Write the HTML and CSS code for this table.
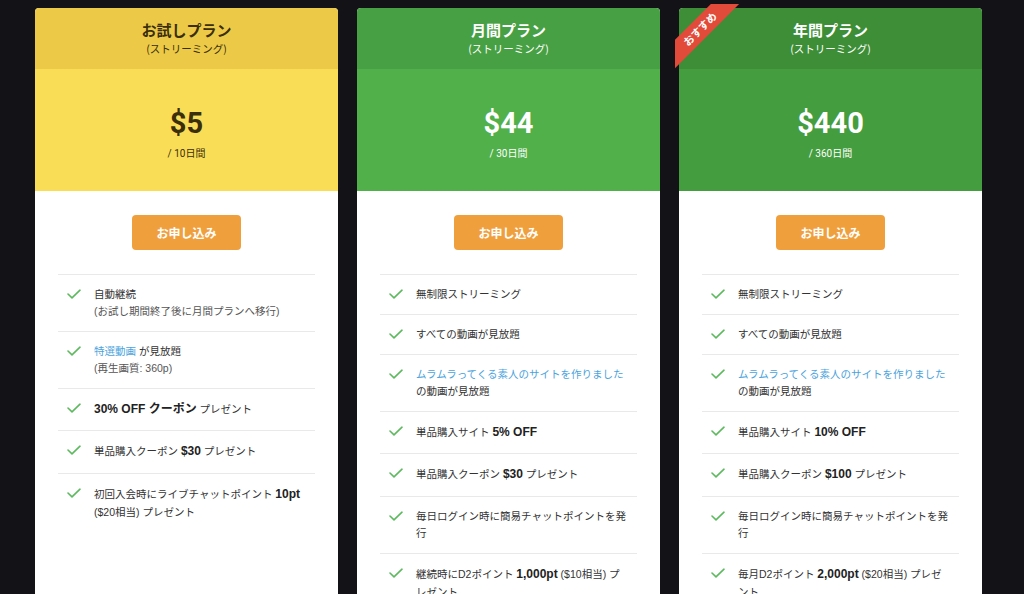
FILE: index.html
```html
<!DOCTYPE html>
<html lang="ja">
<head>
<meta charset="utf-8">
<title>プラン</title>
<link rel="stylesheet" href="styles.css">
</head>
<body>
<main class="plans">
  <section class="plan plan-trial">
    <header class="plan-head">
      <h2 class="plan-title">お試しプラン</h2>
      <p class="plan-sub">(ストリーミング)</p>
    </header>
    <div class="plan-price">
      <p class="price">$5</p>
      <p class="per">/ 10日間</p>
    </div>
    <div class="plan-body">
      <a class="btn" href="#">お申し込み</a>
      <ul class="features">
        <li><svg class="check" viewBox="0 0 14 10"><polyline points="1,5 5,8.8 13,1.2"/></svg><div class="ftext">自動継続<br><span class="note">(お試し期間終了後に月間プランへ移行)</span></div></li>
        <li><svg class="check" viewBox="0 0 14 10"><polyline points="1,5 5,8.8 13,1.2"/></svg><div class="ftext"><a class="link" href="#">特選動画</a> が見放題<br><span class="note">(再生画質: 360p)</span></div></li>
        <li><svg class="check" viewBox="0 0 14 10"><polyline points="1,5 5,8.8 13,1.2"/></svg><div class="ftext"><b>30% OFF クーポン</b> プレゼント</div></li>
        <li><svg class="check" viewBox="0 0 14 10"><polyline points="1,5 5,8.8 13,1.2"/></svg><div class="ftext">単品購入クーポン <b>$30</b> プレゼント</div></li>
        <li><svg class="check" viewBox="0 0 14 10"><polyline points="1,5 5,8.8 13,1.2"/></svg><div class="ftext">初回入会時にライブチャットポイント <b>10pt</b> ($20相当) プレゼント</div></li>
      </ul>
    </div>
  </section>

  <section class="plan plan-month">
    <header class="plan-head">
      <h2 class="plan-title">月間プラン</h2>
      <p class="plan-sub">(ストリーミング)</p>
    </header>
    <div class="plan-price">
      <p class="price">$44</p>
      <p class="per">/ 30日間</p>
    </div>
    <div class="plan-body">
      <a class="btn" href="#">お申し込み</a>
      <ul class="features">
        <li><svg class="check" viewBox="0 0 14 10"><polyline points="1,5 5,8.8 13,1.2"/></svg><div class="ftext">無制限ストリーミング</div></li>
        <li><svg class="check" viewBox="0 0 14 10"><polyline points="1,5 5,8.8 13,1.2"/></svg><div class="ftext">すべての動画が見放題</div></li>
        <li><svg class="check" viewBox="0 0 14 10"><polyline points="1,5 5,8.8 13,1.2"/></svg><div class="ftext"><a class="link" href="#">ムラムラってくる素人のサイトを作りました</a><br>の動画が見放題</div></li>
        <li><svg class="check" viewBox="0 0 14 10"><polyline points="1,5 5,8.8 13,1.2"/></svg><div class="ftext">単品購入サイト <b>5% OFF</b></div></li>
        <li><svg class="check" viewBox="0 0 14 10"><polyline points="1,5 5,8.8 13,1.2"/></svg><div class="ftext">単品購入クーポン <b>$30</b> プレゼント</div></li>
        <li><svg class="check" viewBox="0 0 14 10"><polyline points="1,5 5,8.8 13,1.2"/></svg><div class="ftext">毎日ログイン時に簡易チャットポイントを発行</div></li>
        <li><svg class="check" viewBox="0 0 14 10"><polyline points="1,5 5,8.8 13,1.2"/></svg><div class="ftext">継続時にD2ポイント <b>1,000pt</b> ($10相当) プレゼント</div></li>
      </ul>
    </div>
  </section>

  <section class="plan plan-year">
    <div class="ribbon"><span>おすすめ</span></div>
    <header class="plan-head">
      <h2 class="plan-title">年間プラン</h2>
      <p class="plan-sub">(ストリーミング)</p>
    </header>
    <div class="plan-price">
      <p class="price">$440</p>
      <p class="per">/ 360日間</p>
    </div>
    <div class="plan-body">
      <a class="btn" href="#">お申し込み</a>
      <ul class="features">
        <li><svg class="check" viewBox="0 0 14 10"><polyline points="1,5 5,8.8 13,1.2"/></svg><div class="ftext">無制限ストリーミング</div></li>
        <li><svg class="check" viewBox="0 0 14 10"><polyline points="1,5 5,8.8 13,1.2"/></svg><div class="ftext">すべての動画が見放題</div></li>
        <li><svg class="check" viewBox="0 0 14 10"><polyline points="1,5 5,8.8 13,1.2"/></svg><div class="ftext"><a class="link" href="#">ムラムラってくる素人のサイトを作りました</a><br>の動画が見放題</div></li>
        <li><svg class="check" viewBox="0 0 14 10"><polyline points="1,5 5,8.8 13,1.2"/></svg><div class="ftext">単品購入サイト <b>10% OFF</b></div></li>
        <li><svg class="check" viewBox="0 0 14 10"><polyline points="1,5 5,8.8 13,1.2"/></svg><div class="ftext">単品購入クーポン <b>$100</b> プレゼント</div></li>
        <li><svg class="check" viewBox="0 0 14 10"><polyline points="1,5 5,8.8 13,1.2"/></svg><div class="ftext">毎日ログイン時に簡易チャットポイントを発行</div></li>
        <li><svg class="check" viewBox="0 0 14 10"><polyline points="1,5 5,8.8 13,1.2"/></svg><div class="ftext">毎月D2ポイント <b>2,000pt</b> ($20相当) プレゼント</div></li>
      </ul>
    </div>
  </section>
</main>
</body>
</html>
```

FILE: styles.css
```css
* { box-sizing: border-box; }

html, body {
  margin: 0;
  padding: 0;
  background: #131317;
}

body {
  font-family: "Liberation Sans", "Noto Sans CJK JP", sans-serif;
  color: #333;
}

.plans {
  display: flex;
  gap: 19px;
  padding: 8px 0 0 35px;
  align-items: stretch;
}

.plan {
  position: relative;
  width: 303px;
  min-height: 680px;
  background: #fff;
  border-radius: 4px;
  display: flex;
  flex-direction: column;
}

.plan-head {
  height: 61px;
  padding-top: 12px;
  text-align: center;
  border-radius: 4px 4px 0 0;
}

.plan-title {
  margin: 0;
  font-family: "Noto Sans CJK JP", sans-serif;
  font-size: 15px;
  line-height: 20px;
  font-weight: 700;
}

.plan-sub {
  margin: 1px 0 0;
  font-family: "Noto Sans CJK JP", sans-serif;
  font-size: 10.5px;
  line-height: 15px;
}

.plan-price {
  height: 122px;
  padding-top: 36px;
  text-align: center;
}

.price {
  margin: 0;
  font-family: Roboto, "Liberation Sans", sans-serif;
  font-weight: 700;
  font-size: 29px;
  line-height: 36px;
}

.per {
  margin: 6px 0 0;
  font-family: Roboto, "Noto Sans CJK JP", sans-serif;
  font-size: 10px;
  line-height: 14px;
}

/* colour themes */
.plan-trial .plan-head { background: #ecca48; color: #3b2e0b; }
.plan-trial .plan-price { background: #f9dd57; color: #3b2e0b; }
.plan-month .plan-head { background: #48a044; color: #fff; }
.plan-month .plan-price { background: #51b04a; color: #fff; }
.plan-year .plan-head { background: #3d8e37; color: #fff; }
.plan-year .plan-price { background: #449d3e; color: #fff; }

.plan-body {
  flex: 1;
  padding: 24px 23px 0;
  display: flex;
  flex-direction: column;
  align-items: center;
}

.btn {
  display: block;
  height: 35px;
  padding: 0 24px;
  line-height: 35px;
  background: #f09f3d;
  color: #fff;
  border-radius: 4px;
  text-decoration: none;
  font-family: "Noto Sans CJK JP", sans-serif;
  font-weight: 700;
  font-size: 12px;
}

.features {
  list-style: none;
  margin: 24px 0 0;
  padding: 0;
  width: 100%;
}

.features li {
  display: flex;
  align-items: flex-start;
  gap: 13px;
  padding: 11px 10px 11px 9px;
  border-top: 1px solid #e9e9e9;
  font-size: 10.5px;
  line-height: 1.62;
  color: #333;
}

.check {
  flex: none;
  width: 14px;
  height: 10px;
  margin-top: 3px;
  fill: none;
  stroke: #5cb95e;
  stroke-width: 1.6;
  stroke-linecap: round;
  stroke-linejoin: round;
}

.ftext {
  flex: 1;
  min-width: 0;
}

.ftext b {
  font-size: 12px;
  font-weight: 700;
  color: #222;
}

.note {
  color: #555;
}

.link {
  color: #4ba3dd;
  text-decoration: none;
}

/* recommended ribbon */
.ribbon {
  position: absolute;
  top: -4px;
  left: -4px;
  width: 80px;
  height: 80px;
  overflow: hidden;
  z-index: 2;
}

.ribbon span {
  position: absolute;
  left: -30px;
  top: 15px;
  width: 110px;
  height: 20px;
  line-height: 20px;
  transform: rotate(-45deg);
  background: #e24a3a;
  color: #fff;
  text-align: center;
  font-family: "Noto Sans CJK JP", sans-serif;
  font-weight: 700;
  font-size: 10.5px;
}
```
